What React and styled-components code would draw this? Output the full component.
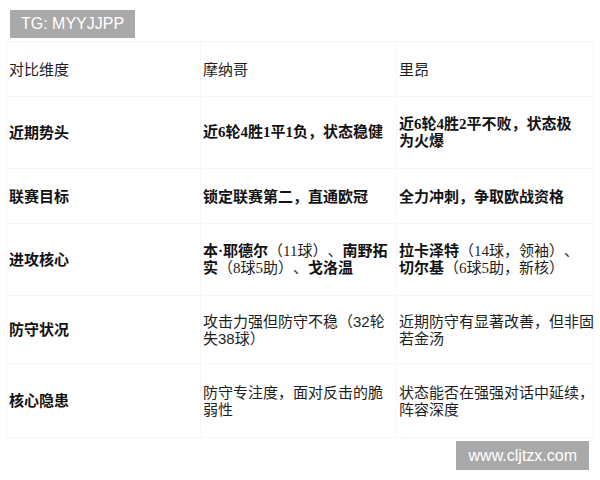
import React from 'react'
import styled, { createGlobalStyle, css } from 'styled-components'

const GlobalStyle = createGlobalStyle`
  html, body {
    margin: 0;
    padding: 0;
    background: #ffffff;
  }
  body {
    font-family: "Liberation Sans", "Noto Sans CJK SC", sans-serif;
    color: #1c1c1c;
  }
`

const Page = styled.div`
  width: 600px;
  height: 480px;
  display: flex;
  flex-direction: column;
  align-items: flex-start;
  padding-top: 10px;
  box-sizing: border-box;
`

// grey watermark labels
const Tag = styled.div`
  background: #a9a9a9;
  color: #ffffff;
  font-family: "Liberation Sans", sans-serif;
  font-size: 16px;
  line-height: 28px;
  height: 28px;
  padding: 0 11px 0 11px;
  white-space: nowrap;
  ${({ bottom }) => bottom
  ? css`
    align-self: flex-end;
    margin: 3px 11px 0 0;
    height: 29px;
    line-height: 29px;
    padding: 0 12px 0 13px;
  `
  : css`
    margin-left: 10px;
  `}
`

const Table = styled.table`
  margin: 3px 0 0 6px;
  width: 587px;
  border-collapse: collapse;
  table-layout: fixed;
  font-size: 15px;
  line-height: 17px;
  text-spacing-trim: space-all;
`

const Row = styled.tr`
  height: ${({ h }) => h}px;
`

const Cell = styled.td`
  border: 1px solid #f6f6f6;
  padding: 0 0 0 2px;
  vertical-align: middle;
  white-space: nowrap;
  font-weight: ${({ bold }) => (bold ? 700 : 400)};
  color: ${({ bold }) => (bold ? '#111' : '#1e1e1e')};
  ${({ serif }) => serif && css`
    font-family: "Liberation Serif", "Noto Sans CJK SC", serif;
  `}

  b {
    font-weight: 700;
    color: #111;
  }
`

const Lines = ({ lines }) =>
  lines.map((l, i) => (
    <React.Fragment key={i}>
      {i > 0 && <br />}
      {l}
    </React.Fragment>
  ))

const rows = [
  {
    h: 72,
    label: '近期势头',
    a: ['近6轮4胜1平1负，状态稳健'],
    b: ['近6轮4胜2平不败，状态极', '为火爆'],
    bold: true,
    serif: true,
  },
  {
    h: 55,
    label: '联赛目标',
    a: ['锁定联赛第二，直通欧冠'],
    b: ['全力冲刺，争取欧战资格'],
    bold: true,
  },
  {
    h: 72,
    label: '进攻核心',
    a: [
      <><b>本·耶德尔</b>（11球）、<b>南野拓</b></>,
      <><b>实</b>（8球5助）、<b>戈洛温</b></>,
    ],
    b: [
      <><b>拉卡泽特</b>（14球，领袖）、</>,
      <><b>切尔基</b>（6球5助，新核）</>,
    ],
    serif: true,
  },
  {
    h: 68,
    label: '防守状况',
    a: ['攻击力强但防守不稳（32轮', '失38球）'],
    b: ['近期防守有显著改善，但非固', '若金汤'],
  },
  {
    h: 74,
    label: '核心隐患',
    a: ['防守专注度，面对反击的脆', '弱性'],
    b: ['状态能否在强强对话中延续，', '阵容深度'],
  },
]

const App = () => {
  return (
    <Page>
      <GlobalStyle />
      <Tag>TG: MYYJJPP</Tag>
      <Table>
        <colgroup>
          <col style={{ width: '194px' }} />
          <col style={{ width: '196px' }} />
          <col style={{ width: '197px' }} />
        </colgroup>
        <tbody>
          <Row h={55}>
            <Cell>对比维度</Cell>
            <Cell>摩纳哥</Cell>
            <Cell>里昂</Cell>
          </Row>
          {rows.map((r) => (
            <Row h={r.h} key={r.label}>
              <Cell bold>{r.label}</Cell>
              <Cell bold={r.bold} serif={r.serif}>
                <Lines lines={r.a} />
              </Cell>
              <Cell bold={r.bold} serif={r.serif}>
                <Lines lines={r.b} />
              </Cell>
            </Row>
          ))}
        </tbody>
      </Table>
      <Tag bottom>www.cljtzx.com</Tag>
    </Page>
  )
}

export default App
